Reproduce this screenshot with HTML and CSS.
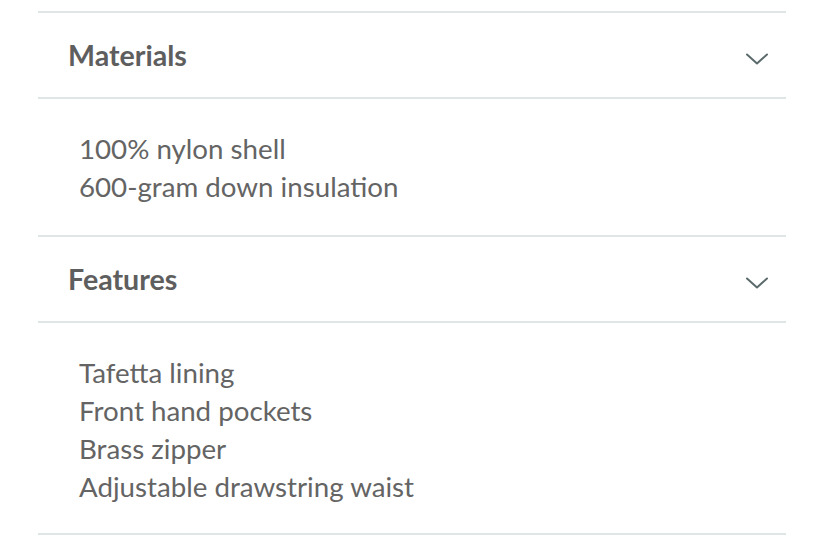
FILE: index.html
```html
<!DOCTYPE html>
<html>
<head>
<meta charset="utf-8">
<link rel="stylesheet" href="styles.css">
</head>
<body>
<div class="accordion">
  <section class="item">
    <div class="header">
      <h2 class="title">Materials</h2>
      <svg class="chevron" width="22" height="12" viewBox="0 0 22 12"><path d="M1 1.5 L11 10.5 L21 1.5" fill="none" stroke="#5b6a6b" stroke-width="2" stroke-linecap="round" stroke-linejoin="round"/></svg>
    </div>
    <ul class="content">
      <li>100% nylon shell</li>
      <li>600-gram down insulation</li>
    </ul>
  </section>
  <section class="item">
    <div class="header">
      <h2 class="title">Features</h2>
      <svg class="chevron" width="22" height="12" viewBox="0 0 22 12"><path d="M1 1.5 L11 10.5 L21 1.5" fill="none" stroke="#5b6a6b" stroke-width="2" stroke-linecap="round" stroke-linejoin="round"/></svg>
    </div>
    <ul class="content">
      <li>Tafetta lining</li>
      <li>Front hand pockets</li>
      <li>Brass zipper</li>
      <li>Adjustable drawstring waist</li>
    </ul>
  </section>
</div>
</body>
</html>
```

FILE: styles.css
```css
* { box-sizing: border-box; }
html, body { margin: 0; padding: 0; background: #fff; }
body { font-family: Lato, "Open Sans", sans-serif; }
.accordion {
  margin: 11px 35px 0 38px;
  border-top: 2px solid #e0e6e6;
}
.item { border-bottom: 2px solid #e0e6e6; }
.header {
  height: 86px;
  display: flex;
  align-items: center;
  justify-content: space-between;
  padding: 0 18px 0 30px;
  border-bottom: 2px solid #e0e6e6;
}
.title {
  margin: 0;
  font-size: 28.6px;
  font-weight: 700;
  color: #5e5e5e;
}
.chevron { margin-top: 8px; }
.content {
  list-style: none;
  margin: 0;
  padding: 31px 0 29px 41px;
  font-size: 27.7px;
  line-height: 38px;
  color: #646464;
}
.item + .item .content { padding-bottom: 27px; }
```
